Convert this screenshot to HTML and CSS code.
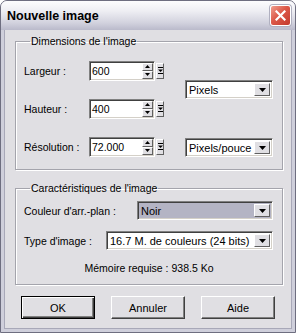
FILE: index.html
```html
<!DOCTYPE html>
<html lang="fr">
<head>
    <meta charset="UTF-8">
    <title>Nouvelle image</title>
    <link rel="stylesheet" href="styles.css">
</head>
<body>
    <div class="window">
        <div class="titlebar">
            <span class="title">Nouvelle image</span>
            <span class="close">
                <svg width="11" height="11" viewBox="0 0 11 11"><path d="M1.5 1.5 L9.5 9.5 M9.5 1.5 L1.5 9.5" stroke="#fff" stroke-width="2.2" stroke-linecap="square"/></svg>
            </span>
        </div>
        <div class="client">
            <fieldset class="group">
                <legend>Dimensions de l'image</legend>
                <div class="dims">
                    <div class="fields">
                        <div class="row">
                            <span class="label">Largeur :</span>
                            <div class="spin">
                                <div class="field"><span class="value">600</span>
                                    <span class="updown">
                                        <span class="btn"><svg width="5" height="3" viewBox="0 0 5 3"><path d="M2.5 0 L5 3 L0 3 Z"/></svg></span>
                                        <span class="btn"><svg width="5" height="3" viewBox="0 0 5 3"><path d="M0 0 L5 0 L2.5 3 Z"/></svg></span>
                                    </span>
                                </div>
                                <span class="step"><svg width="5" height="8" viewBox="0 0 5 8"><rect x="0" y="0" width="5" height="1"/><path d="M0 2.5 L5 2.5 L2.5 5 Z"/><rect x="0" y="6" width="5" height="1"/></svg></span>
                            </div>
                        </div>
                        <div class="row">
                            <span class="label">Hauteur :</span>
                            <div class="spin">
                                <div class="field"><span class="value">400</span>
                                    <span class="updown">
                                        <span class="btn"><svg width="5" height="3" viewBox="0 0 5 3"><path d="M2.5 0 L5 3 L0 3 Z"/></svg></span>
                                        <span class="btn"><svg width="5" height="3" viewBox="0 0 5 3"><path d="M0 0 L5 0 L2.5 3 Z"/></svg></span>
                                    </span>
                                </div>
                                <span class="step"><svg width="5" height="8" viewBox="0 0 5 8"><rect x="0" y="0" width="5" height="1"/><path d="M0 2.5 L5 2.5 L2.5 5 Z"/><rect x="0" y="6" width="5" height="1"/></svg></span>
                            </div>
                        </div>
                        <div class="row">
                            <span class="label">Résolution :</span>
                            <div class="spin">
                                <div class="field"><span class="value">72.000</span>
                                    <span class="updown">
                                        <span class="btn"><svg width="5" height="3" viewBox="0 0 5 3"><path d="M2.5 0 L5 3 L0 3 Z"/></svg></span>
                                        <span class="btn"><svg width="5" height="3" viewBox="0 0 5 3"><path d="M0 0 L5 0 L2.5 3 Z"/></svg></span>
                                    </span>
                                </div>
                                <span class="step"><svg width="5" height="8" viewBox="0 0 5 8"><rect x="0" y="0" width="5" height="1"/><path d="M0 2.5 L5 2.5 L2.5 5 Z"/><rect x="0" y="6" width="5" height="1"/></svg></span>
                            </div>
                        </div>
                    </div>
                    <div class="units">
                        <div class="select unit">
                            <span class="value">Pixels</span>
                            <span class="arrow"><svg width="7" height="4" viewBox="0 0 7 4"><path d="M0 0 L7 0 L3.5 4 Z"/></svg></span>
                        </div>
                        <div class="select unit second">
                            <span class="value">Pixels/pouce</span>
                            <span class="arrow"><svg width="7" height="4" viewBox="0 0 7 4"><path d="M0 0 L7 0 L3.5 4 Z"/></svg></span>
                        </div>
                    </div>
                </div>
            </fieldset>

            <fieldset class="group second-group">
                <legend>Caractéristiques de l'image</legend>
                <div class="row">
                    <span class="label wide">Couleur d'arr.-plan :</span>
                    <div class="select color">
                        <span class="value">Noir</span>
                        <span class="arrow"><svg width="7" height="4" viewBox="0 0 7 4"><path d="M0 0 L7 0 L3.5 4 Z"/></svg></span>
                    </div>
                </div>
                <div class="row type-row">
                    <span class="label mid">Type d'image :</span>
                    <div class="select type">
                        <span class="value">16.7 M. de couleurs (24 bits)</span>
                        <span class="arrow"><svg width="7" height="4" viewBox="0 0 7 4"><path d="M0 0 L7 0 L3.5 4 Z"/></svg></span>
                    </div>
                </div>
                <div class="memory">Mémoire requise : 938.5 Ko</div>
            </fieldset>

            <div class="buttons">
                <button class="button default">OK</button>
                <button class="button">Annuler</button>
                <button class="button">Aide</button>
            </div>
        </div>
    </div>
</body>
</html>
```

FILE: styles.css
```css
* {
    box-sizing: border-box;
}
body {
    margin: 0;
    font-family: "Liberation Sans", Arial, sans-serif;
    font-size: 10.5px;
    color: #000;
    background: #fff;
}
.window {
    width: 296px;
    height: 333px;
    display: flex;
    flex-direction: column;
    border: 1px solid #6e6e80;
    border-radius: 7px 7px 0 0;
    background: #cfcfdb;
    padding: 0 3px 3px;
    overflow: hidden;
}
.titlebar {
    height: 29px;
    margin: 0 -3px;
    padding: 0 4px 0 6px;
    display: flex;
    align-items: center;
    justify-content: space-between;
    background: linear-gradient(#fdfdfe, #eeeef3 35%, #d2d2de 75%, #babacb);
}
.title {
    font-size: 12.5px;
    font-weight: bold;
    padding-top: 1px;
}
.close {
    width: 21px;
    height: 21px;
    display: flex;
    align-items: center;
    justify-content: center;
    border: 1px solid #fff;
    border-radius: 3px;
    background: linear-gradient(135deg, #f0a090, #dc5848 45%, #c43a2e);
    box-shadow: 0 0 0 1px #b0b0c0;
}
.client {
    flex: 1;
    background: #e0dfe3;
    border-left: 1px solid #a8a8b8;
    border-right: 1px solid #a8a8b8;
    border-bottom: 1px solid #a8a8b8;
    padding: 5px 8px 0 10px;
}
.group {
    margin: 0;
    padding: 13px 8px 12px 8px;
    border: 1px solid #a4a4ac;
    box-shadow: inset 1px 1px #fff, 1px 1px #fff;
}
.group legend {
    padding: 0 1px;
    margin-left: 6px;
    line-height: 13px;
}
.dims {
    display: flex;
}
.fields {
    display: flex;
    flex-direction: column;
    gap: 18px;
}
.row {
    display: flex;
    align-items: center;
}
.label {
    width: 65px;
}
.label.wide {
    width: 113px;
}
.label.mid {
    width: 82px;
}
.spin {
    display: flex;
    height: 20px;
}
.field {
    width: 66px;
    display: flex;
    align-items: center;
    background: #fff;
    border: 1px solid;
    border-color: #808080 #fff #fff #808080;
    box-shadow: inset 1px 1px #404040, inset -1px -1px #d4d0c8;
    padding: 1px 1px 2px 2px;
}
.value {
    flex: 1;
    white-space: nowrap;
}
.updown {
    width: 11px;
    height: 16px;
    display: flex;
    flex-direction: column;
}
.btn,
.step,
.arrow {
    display: flex;
    align-items: center;
    justify-content: center;
    background: #e0dfe3;
    border: 1px solid;
    border-color: #fff #606060 #606060 #fff;
}
.btn {
    flex: 1;
}
.step {
    width: 8px;
    height: 16px;
    margin: 2px 0 0 1px;
}
.units {
    margin-left: 21px;
    padding-top: 19px;
    display: flex;
    flex-direction: column;
    gap: 39px;
}
.select {
    height: 19px;
    display: flex;
    align-items: center;
    background: #fff;
    border: 1px solid;
    border-color: #808080 #fff #fff #808080;
    box-shadow: inset 1px 1px #404040, inset -1px -1px #d4d0c8;
    padding: 2px 2px 2px 3px;
}
.select .value {
    font-size: 11px;
}
.arrow {
    width: 16px;
    height: 100%;
}
.unit {
    width: 88px;
}
.color {
    width: 136px;
    background: #b4b4c4;
}
.type {
    width: 167px;
}
.second-group {
    margin-top: 12px;
    padding: 6px 8px 9px 8px;
}
.type-row {
    margin-top: 11px;
}
.memory {
    margin-top: 12px;
    text-align: center;
    line-height: 13px;
}
.buttons {
    display: flex;
    gap: 16px;
    padding: 11px 0 0 6px;
}
.button {
    width: 74px;
    height: 23px;
    font-family: inherit;
    font-size: 11px;
    color: #000;
    background: #e0dfe3;
    border: 1px solid;
    border-color: #fff #404040 #404040 #fff;
    box-shadow: inset -1px -1px #808080;
    padding: 0;
}
.button.default {
    border: 1px solid #000;
    box-shadow: inset 1px 1px #fff, inset -1px -1px #404040, inset -2px -2px #808080;
}
```
